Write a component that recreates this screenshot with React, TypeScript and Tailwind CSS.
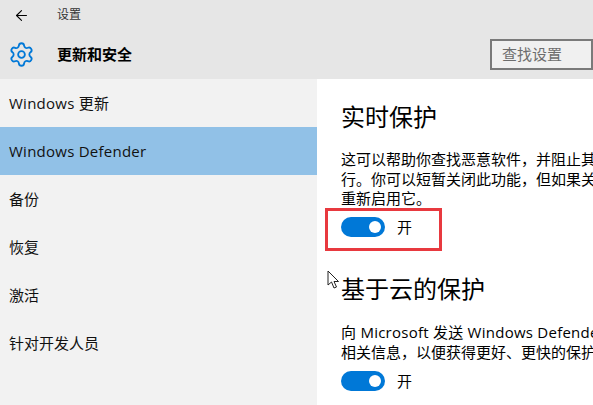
import React from 'react';
import { ArrowLeft, Settings } from 'lucide-react';

const NAV_ITEMS = ['Windows 更新', 'Windows Defender', '备份', '恢复', '激活', '针对开发人员'];

const Toggle = () => (
  <div className="flex items-center gap-3">
    <div className="flex h-5 w-11 items-center justify-end rounded-full bg-[#0078d7] pr-1">
      <div className="h-3 w-3 rounded-full bg-white"></div>
    </div>
    <span className="text-[15px] leading-5 text-black">开</span>
  </div>
);

export default function App() {
  return (
    <div className="relative flex h-[405px] w-[593px] flex-col overflow-hidden bg-white font-['Open_Sans','Noto_Sans_CJK_SC',sans-serif]">
      {/* Title bar */}
      <div className="flex h-[79px] shrink-0 flex-col bg-[#e6e6e6]">
        <div className="flex h-[30px] items-center pl-[13px]">
          <ArrowLeft size={17} strokeWidth={1.5} className="text-black" />
          <span className="ml-[27px] text-xs text-[#333333]">设置</span>
        </div>
        <div className="flex flex-1 items-center justify-between pl-[8px]">
          <div className="flex items-center">
            <Settings size={27} strokeWidth={1.6} className="text-[#0078d7]" />
            <span className="ml-[22px] text-[15px] font-bold text-black">更新和安全</span>
          </div>
          <div className="flex h-[31px] w-[103px] items-center border-2 border-[#7a7a7a] bg-[#f0f0f0] pl-[10px] text-[15px] text-[#6d6d6d]">
            查找设置
          </div>
        </div>
      </div>

      <div className="flex flex-1 overflow-hidden">
        {/* Sidebar */}
        <div className="w-[317px] shrink-0 bg-[#f2f2f2]">
          {NAV_ITEMS.map((item) => (
            <div
              key={item}
              className={`flex h-12 items-center pl-[9px] text-[15px] text-[#111111] ${item.startsWith('Windows') ? 'tracking-[0.25px]' : ''} ${item === 'Windows Defender' ? 'bg-[#91c1e7]' : ''}`}
            >
              {item}
            </div>
          ))}
        </div>

        {/* Content */}
        <div className="min-w-0 flex-1 overflow-hidden whitespace-nowrap pl-6 pt-[20px]">
          <h1 className="text-2xl leading-9 text-black">实时保护</h1>
          <div className="mt-[15px] text-[15px] leading-[19.5px] text-black">
            <p>这可以帮助你查找恶意软件，并阻止其</p>
            <p>行。你可以短暂关闭此功能，但如果关</p>
            <p>重新启用它。</p>
          </div>
          <div className="mt-[8px]">
            <Toggle />
          </div>
          <h1 className="mt-[34px] text-2xl leading-9 text-black">基于云的保护</h1>
          <div className="mt-[15px] text-[15px] leading-5 text-black">
            <p className="tracking-[0.25px]">向 Microsoft 发送 Windows Defender</p>
            <p>相关信息，以便获得更好、更快的保护</p>
          </div>
          <div className="mt-[9px]">
            <Toggle />
          </div>
        </div>
      </div>

      {/* Red annotation box */}
      <div className="absolute left-[325px] top-[208px] h-[43px] w-[117px] border-[3px] border-[#e8393f]"></div>

      {/* Mouse cursor */}
      <svg className="absolute left-[327px] top-[270px]" width="14" height="20" viewBox="0 0 14 20" fill="none">
        <path d="M1 1V15L4.5 12L7 18L9.5 17L7 11.5H11.5L1 1Z" fill="#ffffff" stroke="#222222" strokeWidth="1" />
      </svg>
    </div>
  );
}
